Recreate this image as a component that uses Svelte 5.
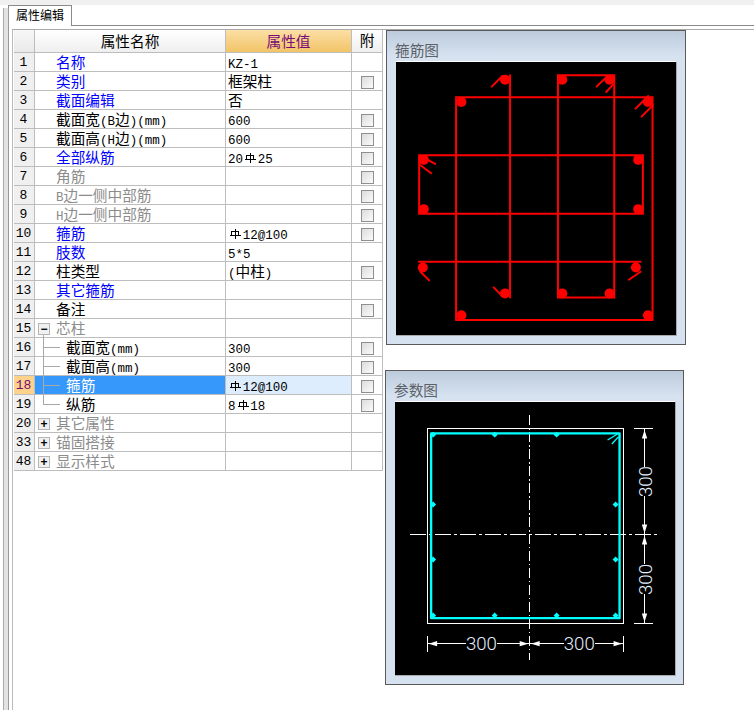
<script>
	// n, name, value, tone of the name, checkbox, indent/tree state
	const rows = [
		{ n: 1, name: '名称', value: 'KZ-1', tone: 'blue' },
		{ n: 2, name: '类别', value: '框架柱', tone: 'blue', check: true },
		{ n: 3, name: '截面编辑', value: '否', tone: 'blue' },
		{ n: 4, name: '截面宽(B边)(mm)', value: '600', check: true },
		{ n: 5, name: '截面高(H边)(mm)', value: '600', check: true },
		{ n: 6, name: '全部纵筋', value: '20#25', tone: 'blue', check: true },
		{ n: 7, name: '角筋', tone: 'gray', check: true },
		{ n: 8, name: 'B边一侧中部筋', tone: 'gray', check: true },
		{ n: 9, name: 'H边一侧中部筋', tone: 'gray', check: true },
		{ n: 10, name: '箍筋', value: '#12@100', tone: 'blue', check: true },
		{ n: 11, name: '肢数', value: '5*5', tone: 'blue' },
		{ n: 12, name: '柱类型', value: '(中柱)', check: true },
		{ n: 13, name: '其它箍筋', tone: 'blue' },
		{ n: 14, name: '备注', check: true },
		{ n: 15, name: '芯柱', tone: 'gray', fold: '−' },
		{ n: 16, name: '截面宽(mm)', value: '300', check: true, tree: 'mid' },
		{ n: 17, name: '截面高(mm)', value: '300', check: true, tree: 'mid' },
		{ n: 18, name: '箍筋', value: '#12@100', check: true, tree: 'mid', active: true },
		{ n: 19, name: '纵筋', value: '8#18', check: true, tree: 'end' },
		{ n: 20, name: '其它属性', tone: 'gray', fold: '+' },
		{ n: 33, name: '锚固搭接', tone: 'gray', fold: '+' },
		{ n: 48, name: '显示样式', tone: 'gray', fold: '+' }
	];

	// split a label into CJK and latin runs, they use different fonts
	function runs(text = '') {
		return text.match(/[\u4e00-\u9fff]+|[^\u4e00-\u9fff]+/g) ?? [];
	}

	function isCjk(part) {
		return /[\u4e00-\u9fff]/.test(part);
	}

	const bars = [
		[360, 163], [532, 163], [674, 163], [229, 230], [789, 230],
		[116, 404], [760, 404], [116, 552], [760, 552], [113, 727], [753, 727],
		[360, 805], [532, 805], [674, 805], [229, 871], [789, 871]
	];

	const dots = [
		[143, 208], [328, 208], [514, 208], [143, 418], [691, 418], [143, 583], [691, 583],
		[143, 751], [328, 751], [514, 751], [691, 751]
	];
</script>

<div class="page">
	<div class="strip"></div>
	<div class="tabs">
		<div class="tab">属性编辑</div>
		<div class="tab-rule"></div>
	</div>
	<div class="frame">
		<div class="content">
			<div class="grid">
				<div class="cell head corner"></div>
				<div class="cell head">属性名称</div>
				<div class="cell head value-head">属性值</div>
				<div class="cell head last">附</div>

				{#each rows as row}
					<div class="cell num" class:num-active={row.active}>{row.n}</div>
					<div class="cell name {row.tone ?? ''}" class:active={row.active} class:nested={row.tree}>
						{#if row.fold}
							<span class="fold">{row.fold}</span>
						{/if}
						{#if row.n === 15}
							<span class="tree-stem top"></span>
						{/if}
						{#if row.tree}
							<span class="tree-stem" class:end={row.tree === 'end'}></span>
							<span class="tree-arm"></span>
						{/if}
						{#each runs(row.name) as part}
							<span class={isCjk(part) ? 'cjk' : 'lat'}>{part}</span>
						{/each}
					</div>
					<div class="cell val" class:val-active={row.active}>
						{#each runs(row.value).flatMap((p) => p.split(/(#)/)) as part}
							{#if part === '#'}
								<svg class="grade" width="12" height="12" viewBox="0 0 12 12">
									<path d="M2.5 7.5V3.5H9.5V7.5M.5 7.5H11.5M6 1V11" fill="none" stroke="currentColor" />
								</svg>
							{:else if part}
								<span class={isCjk(part) ? 'cjk' : 'lat'}>{part}</span>
							{/if}
						{/each}
					</div>
					<div class="cell last">
						{#if row.check}<span class="check"></span>{/if}
					</div>
				{/each}
			</div>

			<div class="side">
				<section class="panel">
					<h2>箍筋图</h2>
					<div class="canvas">
						<svg width="280" height="273" viewBox="33 110 840 820">
							<g fill="none" stroke="#f00" stroke-width="6" stroke-linecap="round">
								<path d="M213 885V216H803V885Z" />
								<path d="M102 566V390H774V566Z" />
								<path d="M519 817V150H688V817Z" />
								<path d="M375 150V817M101 710H767" />
								<path d="M320 184L352 152M635 184L668 152M664 200L684 178M752 250L790 212M770 274L804 240" />
								<path d="M106 392L150 416M106 420L138 444M106 740L132 766M767 740L732 764M326 787L352 814" />
							</g>
							<g fill="#f00">
								{#each bars as [cx, cy]}
									<circle {cx} {cy} r="15" />
								{/each}
							</g>
						</svg>
					</div>
				</section>

				<section class="panel second">
					<h2>参数图</h2>
					<div class="canvas">
						<svg width="280" height="273" viewBox="29 110 840 820">
							<g class="crisp" fill="none" stroke="#fff" stroke-width="3">
								<path d="M125 190H715V775H125Z" />
								<path d="M433 150V884" stroke-dasharray="30 8 5 8" />
								<path d="M75 508H822" stroke-dasharray="48 9 9 9" />
								<path d="M747 190H803M747 775H803M778 190V305M778 392V508M778 508V598M778 686V775" />
								<path d="M125 812V862M715 812V862M433 836H440M125 836H242M334 836H433M433 836H535M628 836H715" />
							</g>
							<g fill="#fff">
								<path d="M778 194L786 220H770ZM778 504L786 478H770ZM778 512L786 538H770ZM778 771L786 745H770Z" />
								<path d="M129 836L155 828V844ZM429 836L403 828V844ZM437 836L463 828V844ZM711 836L685 828V844Z" />
							</g>
							<g fill="none" stroke="#00ffff">
								<path d="M137 204H703V759H137Z" stroke-width="7" stroke-linejoin="round" />
								<path d="M667 224L697 206M680 236L700 214" stroke-width="4" />
							</g>
							<g fill="#00ffff">
								{#each dots as [x, y]}
									<path d="M{x} {y - 9}L{x + 9} {y}L{x} {y + 9}L{x - 9} {y}Z" />
								{/each}
							</g>
							<g class="dim">
								<text x="288" y="855">300</text>
								<text x="582" y="855">300</text>
								<text x="799" y="349" transform="rotate(-90 799 349)">300</text>
								<text x="799" y="643" transform="rotate(-90 799 643)">300</text>
							</g>
						</svg>
					</div>
				</section>
			</div>
		</div>
	</div>
</div>

<style>
	:global(body) {
		background: #fff;
	}

	.page {
		height: 710px;
		overflow: hidden;
		font-family: 'Noto Sans CJK SC', sans-serif;
		font-size: 14.67px;
		color: #000;
	}

	.strip {
		height: 5px;
		background: #f0f0f0;
	}

	.tabs {
		display: flex;
		align-items: flex-end;
		height: 21px;
		padding-left: 8px;
	}

	.tab {
		box-sizing: border-box;
		width: 64px;
		height: 21px;
		border: 1px solid #8a8a8a;
		border-bottom: none;
		background: #fff;
		font-size: 12px;
		line-height: 18px;
		text-align: center;
	}

	.tab-rule {
		flex: 1;
		height: 1px;
		background: #8a8a8a;
	}

	.frame {
		height: 684px;
		padding-left: 3px;
		display: flex;
	}

	/* the double bar down the left side */
	.frame::before {
		content: '';
		box-sizing: border-box;
		width: 6px;
		flex: none;
		margin-top: -18px;
		border-left: 1px solid #aaa;
		border-right: 1px solid #999;
		background: #e2e2e2;
	}

	.content {
		flex: 1;
		display: flex;
		align-items: flex-start;
		margin: 3px 0 0 3px;
		padding-left: 1px;
		border-top: 1px solid #aaa;
		border-left: 1px solid #bbb;
	}

	.grid {
		display: grid;
		grid-template-columns: 21px 191px 126px 31px;
		grid-template-rows: 23px repeat(22, 19px);
		width: 369px;
	}

	.cell {
		box-sizing: border-box;
		position: relative;
		border-right: 1px solid #bdbdbd;
		border-bottom: 1px solid #bdbdbd;
		line-height: 18px;
		white-space: nowrap;
	}

	.head {
		background: linear-gradient(#fff, #efefef);
		text-align: center;
		line-height: 22px;
	}

	.corner {
		background: linear-gradient(#f7f7f7, #e9e9e9);
	}

	.value-head {
		background: linear-gradient(#fbdfa6, #f2c467);
		color: #7a0a78;
	}

	.last {
		text-align: center;
	}

	.head.last {
		line-height: 19px;
	}

	.num {
		background: #f0f0f0;
		font-family: 'Liberation Mono', monospace;
		font-size: 13px;
		line-height: 20px;
		text-align: center;
		padding-right: 1px;
	}

	.num-active {
		background: #fdd28b;
		color: #7a0a78;
	}

	.name {
		padding-left: 21px;
	}

	.nested {
		padding-left: 31px;
	}

	.blue {
		color: #0000ff;
	}

	.gray {
		color: #8c8c8c;
	}

	.active {
		background: #3798fb;
		color: #fff;
	}

	.val {
		padding-left: 2px;
	}

	.val-active {
		background: #ddedfd;
	}

	.lat {
		font-family: 'Liberation Mono', monospace;
		font-size: 12.5px;
	}

	.grade {
		vertical-align: -1px;
		margin: 0 1.33px;
		shape-rendering: crispEdges;
	}

	.check {
		position: absolute;
		left: 9px;
		top: 4px;
		box-sizing: border-box;
		width: 13px;
		height: 13px;
		border: 1px solid #8f8f8f;
		background: linear-gradient(135deg, #dcdcdc, #fbfbfb);
	}

	.fold {
		position: absolute;
		left: 3px;
		top: 4px;
		box-sizing: border-box;
		width: 12px;
		height: 12px;
		border: 1px solid #b5b5b5;
		background: #f0f0f0;
		color: #000;
		font: bold 12px/10px 'Liberation Sans', sans-serif;
		text-align: center;
	}

	.tree-stem {
		position: absolute;
		left: 8px;
		top: -1px;
		bottom: -1px;
		width: 1px;
		background: #a8a8a8;
	}

	.tree-stem.top {
		top: 16px;
	}

	.tree-stem.end {
		bottom: 8px;
	}

	.tree-arm {
		position: absolute;
		left: 8px;
		top: 9px;
		width: 17px;
		height: 1px;
		background: #a8a8a8;
	}

	.side {
		display: flex;
		flex-direction: column;
		gap: 25px;
		margin-left: 3px;
	}

	.panel {
		box-sizing: border-box;
		width: 300px;
		height: 315px;
		padding: 0 9px;
		border: 1px solid #5a5a5a;
		background: linear-gradient(#bccbdb, #d6e2f0 25px);
	}

	.second {
		width: 299px;
		margin-left: -1px;
	}

	.panel h2 {
		margin: 0 0 0 -1px;
		height: 30px;
		padding-top: 9px;
		box-sizing: border-box;
		font-size: 14.67px;
		font-weight: normal;
		line-height: 20px;
		color: #5d6268;
	}

	.canvas {
		width: 280px;
		height: 273px;
		background: #000;
		border-top: 1px solid #fff;
		border-right: 1px solid #a9a9a9;
		border-bottom: 1px solid #a9a9a9;
	}

	.canvas svg {
		display: block;
	}

	.crisp {
		shape-rendering: crispEdges;
	}

	.dim text {
		fill: #e4f0ff;
		font-family: Roboto, sans-serif;
		font-weight: 300;
		font-size: 56px;
		text-anchor: middle;
	}
</style>
